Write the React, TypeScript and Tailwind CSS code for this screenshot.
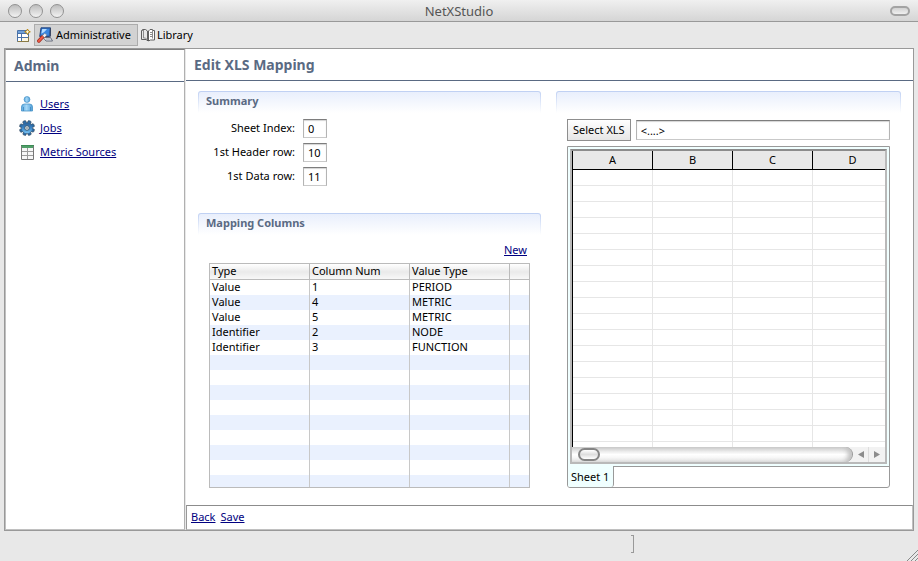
import type { ReactNode } from 'react';

type Mapping = { type: string; column: string; valueType: string };

const mappings: Mapping[] = [
  { type: 'Value', column: '1', valueType: 'PERIOD' },
  { type: 'Value', column: '4', valueType: 'METRIC' },
  { type: 'Value', column: '5', valueType: 'METRIC' },
  { type: 'Identifier', column: '2', valueType: 'NODE' },
  { type: 'Identifier', column: '3', valueType: 'FUNCTION' },
];

const emptyMappingRows = Array.from({ length: 8 }, (_, i) => i);
const sheetColumns = ['A', 'B', 'C', 'D'];
const sheetRows = Array.from({ length: 17 }, (_, i) => i);

const summaryFields = [
  { id: 'sheet-index', label: 'Sheet Index:', value: '0' },
  { id: 'header-row', label: '1st Header row:', value: '10' },
  { id: 'data-row', label: '1st Data row:', value: '11' },
];

function PerspectiveIcon() {
  return (
    <svg width="14" height="14" viewBox="0 0 14 14" aria-hidden="true">
      <path d="M.5 2.500h11v11H.5z" fill="#fff" stroke="#4a72a8" />
      <path d="M1 3h8v2H1z" fill="#6f9fd8" />
      <path d="M1 5.500h10M4.500 6v7M1 9.500h3M5 9.500h6" stroke="#4a72a8" fill="none" />
      <path d="M5 10h6v3H5z" fill="#fdf8e4" />
      <path d="M.5 13.500h11v-5" stroke="#8b7b45" fill="none" />
      <path d="M10.500 1l.9 1.900 1.900.9-1.900.9-.9 1.900-.9-1.900-1.900-.9 1.900-.9z" fill="#fffbe0" stroke="#b8860f" />
    </svg>
  );
}

function AdminIcon() {
  return (
    <svg width="16" height="16" viewBox="0 0 16 16" aria-hidden="true">
      <path d="M4 .8h9.500l-.8 8.700H2.700z" fill="#2f6fc4" stroke="#1f3f7a" strokeWidth=".9" />
      <path d="M5 2h7.200l-.5 6.300H4z" fill="#3a86e0" />
      <path d="M5.200 2h4.800Q8 5 4.300 6.800z" fill="#b4dcff" />
      <path d="M13.500 1v8.500" stroke="#33415e" strokeWidth=".9" />
      <path d="M6 10.500h7.500l2 3.500H9z" fill="#e3e6ee" stroke="#5a6070" strokeWidth=".9" />
      <path d="M9 12h4.500" stroke="#8a90a0" strokeWidth=".8" />
      <path d="M1.800 14L6 9.500" stroke="#a32719" strokeWidth="3.400" strokeLinecap="round" />
      <path d="M1.800 14L6 9.500" stroke="#ee5a45" strokeWidth="2" strokeLinecap="round" />
      <path d="M5.500 8.700l2.300-2.400 2 1.800-2.300 2.400z" fill="#f4f4f8" stroke="#777" strokeWidth=".6" />
    </svg>
  );
}

function LibraryIcon() {
  return (
    <svg width="14" height="14" viewBox="0 0 14 14" aria-hidden="true">
      <path d="M.5 2.500h1V1.500h3l2 1.500v9.500l-1.500-1h-4.500z" fill="#e8e8e8" stroke="#606060" />
      <path d="M2.500 2v8h2l2 2" fill="none" stroke="#8c8c8c" />
      <path d="M7.500 3l1.500-1.500h2.500v1h2v9.500h-4l-2 1z" fill="#fff" stroke="#606060" />
      <path d="M9 4.500h2M9 6.500h2M9 8.500h2M11.500 3v7.500" stroke="#8c8c8c" />
      <path d="M6 12.500h2" stroke="#555" />
    </svg>
  );
}

function UserIcon() {
  return (
    <svg width="14" height="16" viewBox="0 0 14 16" aria-hidden="true">
      <defs>
        <linearGradient id="user-fill" x1="0" x2="1" y1="0" y2="0">
          <stop offset="0" stopColor="#5aa9df" />
          <stop offset=".45" stopColor="#a5d8f8" />
          <stop offset="1" stopColor="#4f9fd8" />
        </linearGradient>
      </defs>
      <path d="M1.500 15v-4q0-3 3-3h5q3 0 3 3v4z" fill="url(#user-fill)" stroke="#4a94c8" strokeWidth=".8" />
      <path d="M3.500 15v-4M10.500 15v-4" stroke="#3d88bf" strokeWidth=".8" />
      <circle cx="7" cy="3.500" r="2.900" fill="url(#user-fill)" stroke="#4a94c8" strokeWidth=".8" />
    </svg>
  );
}

function JobsIcon() {
  return (
    <svg width="16" height="16" viewBox="0 0 16 16" aria-hidden="true">
      <defs>
        <linearGradient id="gear-fill" x1="0" x2="0" y1="0" y2="1">
          <stop offset="0" stopColor="#2b5f97" />
          <stop offset=".5" stopColor="#3a86c8" />
          <stop offset="1" stopColor="#7cc4f2" />
        </linearGradient>
      </defs>
      <g fill="#2f6ea8" stroke="#2c4257" strokeWidth=".6">
        <rect x="6.400" y=".4" width="3.200" height="15.200" rx=".8" transform="rotate(22 8 8)" />
        <rect x="6.400" y=".4" width="3.200" height="15.200" rx=".8" transform="rotate(67 8 8)" />
        <rect x="6.400" y=".4" width="3.200" height="15.200" rx=".8" transform="rotate(112 8 8)" />
        <rect x="6.400" y=".4" width="3.200" height="15.200" rx=".8" transform="rotate(157 8 8)" />
      </g>
      <circle cx="8" cy="8" r="5.300" fill="url(#gear-fill)" />
      <circle cx="8" cy="8" r="2.300" fill="#dfe6ea" stroke="#34536d" strokeWidth=".9" />
      <circle cx="8" cy="8" r=".8" fill="#5d6d78" />
    </svg>
  );
}

function SheetIcon() {
  return (
    <svg width="13" height="15" viewBox="0 0 13 15" aria-hidden="true">
      <path d="M.5.500h12v14H.5z" fill="#f6f6f6" stroke="#777" />
      <path d="M1 1h11v2H1z" fill="#4fa068" />
      <path d="M0 .5h13" stroke="#3d8a55" />
      <path d="M1 6.500h11M1 10.500h11M6.500 3v11" stroke="#9a9a9a" fill="none" />
    </svg>
  );
}

const navItems = [
  { label: 'Users', icon: <UserIcon /> },
  { label: 'Jobs', icon: <JobsIcon /> },
  { label: 'Metric Sources', icon: <SheetIcon /> },
];

function TextLink({ children }: { children: ReactNode }) {
  return (
    <a href="#" className="text-[#000080] underline underline-offset-1">
      {children}
    </a>
  );
}

function SectionHeader({ title }: { title?: string }) {
  return (
    <div className="h-[22px] rounded-t-[3px] bg-linear-to-b from-[#bfd0f3] to-white px-px pt-px">
      <h2 className="h-full rounded-t-[2px] bg-linear-to-b from-[#e9effc] to-white px-[7px] text-[11px] leading-[18px] font-bold text-[#5a6a83]">
        {title}
      </h2>
    </div>
  );
}

const inputClass =
  'border border-t-[#7d7d7d] border-x-[#b4b4b4] border-b-[#c9c9c9] bg-white px-1 text-[11px] leading-4 shadow-[inset_0_1px_1px_#d4d4d4] outline-none';

function TitleBar() {
  return (
    <header className="flex h-[22px] items-center border-b border-[#999] bg-linear-to-b from-[#f0f0f0] to-[#d5d5d5] px-2">
      <div className="flex flex-1 gap-[7px]">
        {['Close', 'Minimize', 'Zoom'].map((name) => (
          <button
            key={name}
            type="button"
            aria-label={name}
            className="size-[14px] rounded-full border border-[#929292] bg-linear-to-b from-[#bdbdbd] to-[#f3f3f3]"
          />
        ))}
      </div>
      <h1 className="text-[13px] leading-5 text-[#555]">NetXStudio</h1>
      <div className="flex flex-1 justify-end">
        <button
          type="button"
          aria-label="Toggle toolbar"
          className="h-[10px] w-5 rounded-full border-2 border-[#a3a3a3] bg-linear-to-b from-[#d2d2d2] to-[#f0f0f0]"
        />
      </div>
    </header>
  );
}

function Toolbar() {
  return (
    <nav className="flex h-[26px] items-center pl-[17px]" aria-label="Perspectives">
      <button type="button" aria-label="Open perspective" className="mr-[3px]">
        <PerspectiveIcon />
      </button>
      <button
        type="button"
        className="flex h-[22px] items-center gap-[3px] border border-[#acacac] bg-[#d2d2d2] pr-[6px] pl-[2px]"
      >
        <AdminIcon />
        Administrative
      </button>
      <button type="button" className="ml-[3px] flex h-[22px] items-center gap-[2px]">
        <LibraryIcon />
        Library
      </button>
    </nav>
  );
}

function Sidebar() {
  return (
    <aside className="w-[180px] shrink-0 border border-t-[#808080] border-r-[#b0b0b0] border-b-[#c0c0c0] border-l-[#c0c0c0] bg-white">
      <h2 className="h-8 border-b border-[#5a6a83] px-2 text-[14px] leading-[31px] font-bold text-[#5a6a83]">Admin</h2>
      <ul className="pt-[10px] pl-[13px]">
        {navItems.map((item) => (
          <li key={item.label} className="flex h-6 items-center gap-[5px]">
            <span className="flex w-4 justify-center">{item.icon}</span>
            <TextLink>{item.label}</TextLink>
          </li>
        ))}
      </ul>
    </aside>
  );
}

function MappingTable() {
  const cell = 'border-r border-[#c8c8c8] px-[2px] pb-[2px] leading-[13px]';
  return (
    <table className="w-full table-fixed border-separate border-spacing-0 border border-[#bbb] text-left">
      <colgroup>
        <col className="w-[100px]" />
        <col className="w-[100px]" />
        <col className="w-[100px]" />
        <col />
      </colgroup>
      <thead>
        <tr className="h-4 bg-linear-to-b from-white via-[#eaeaea] to-[#fafafa]">
          {['Type', 'Column Num', 'Value Type', ''].map((name) => (
            <th
              key={name}
              className="border-r border-b border-[#bbb] px-[2px] pb-[2px] leading-[13px] font-normal last:border-r-0"
            >
              {name}
            </th>
          ))}
        </tr>
      </thead>
      <tbody>
        {mappings.map((row) => (
          <tr key={row.column} className="h-[15px] even:bg-[#eaf1fe]">
            <td className={cell}>{row.type}</td>
            <td className={cell}>{row.column}</td>
            <td className={cell}>{row.valueType}</td>
            <td />
          </tr>
        ))}
        {emptyMappingRows.map((i) => (
          <tr key={i} className="h-[15px] even:bg-[#eaf1fe]">
            <td className={cell} />
            <td className={cell} />
            <td className={cell} />
            <td />
          </tr>
        ))}
        <tr className="h-3 bg-[#eaf1fe]">
          <td className={cell} />
          <td className={cell} />
          <td className={cell} />
          <td />
        </tr>
      </tbody>
    </table>
  );
}

function ScrollBar() {
  return (
    <div className="flex h-[15px] bg-[#f2f2f2]">
      <div className="flex flex-1 items-center rounded-r-full border-r border-[#999] bg-linear-to-b from-[#cfcfcf] via-white to-[#ececec] pl-[6px] shadow-[inset_-4px_0_4px_#c4c4c4]">
        <div className="h-[13px] w-[22px] rounded-full border-2 border-[#858585] bg-linear-to-b from-white via-[#dedede] to-white" />
      </div>
      <button type="button" aria-label="Scroll left" className="flex w-4 items-center justify-center border-r border-[#ddd]">
        <svg width="6" height="7" viewBox="0 0 6 7" aria-hidden="true">
          <path d="M6 0v7L0 3.500z" fill="#8c8c8c" />
        </svg>
      </button>
      <button type="button" aria-label="Scroll right" className="flex w-4 items-center justify-center">
        <svg width="6" height="7" viewBox="0 0 6 7" aria-hidden="true">
          <path d="M0 0v7l6-3.500z" fill="#8c8c8c" />
        </svg>
      </button>
    </div>
  );
}

function SheetPreview() {
  return (
    <div className="mt-[5px] overflow-hidden rounded-b-[3px] border border-[#999] bg-white">
      <div className="bg-[#f0ffff] p-[2px]">
        <div className="overflow-hidden border-2 border-[#b9b9b9] border-t-[#8c8c8c] bg-white">
          <table className="w-[calc(100%+8px)] table-fixed border-separate border-spacing-0 border-l border-black">
            <colgroup>
              <col className="w-20" />
              <col className="w-20" />
              <col className="w-20" />
              <col />
            </colgroup>
            <thead>
              <tr className="h-[19px] bg-[#e8e8e8]">
                {sheetColumns.map((name) => (
                  <th key={name} className="border-r border-b border-black leading-[18px] font-normal">
                    {name}
                  </th>
                ))}
              </tr>
            </thead>
            <tbody>
              {sheetRows.map((row) => (
                <tr key={row} className="h-4">
                  {sheetColumns.map((name) => (
                    <td key={name} className="border-r border-b border-[#e6e6e6]" />
                  ))}
                </tr>
              ))}
              <tr className="h-[5px]">
                {sheetColumns.map((name) => (
                  <td key={name} className="border-r border-[#e6e6e6]" />
                ))}
              </tr>
            </tbody>
          </table>
          <ScrollBar />
        </div>
      </div>
      <div className="flex h-[21px]">
        <button type="button" className="rounded-br-[3px] border-r border-[#999] bg-[#f0ffff] pr-1 pl-[3px]">
          Sheet 1
        </button>
        <div className="flex-1 border-t border-[#999]" />
      </div>
    </div>
  );
}

function Editor() {
  return (
    <main className="ml-px flex min-w-0 flex-1 flex-col bg-white">
      <h1 className="h-8 border-b border-[#5a6a83] px-2 text-[14px] leading-[31px] font-bold text-[#5a6a83]">
        Edit XLS Mapping
      </h1>
      <div className="grid flex-1 grid-cols-[343fr_345fr] gap-[15px] px-3 pt-[10px] pb-[17px]">
        <div>
          <section>
            <SectionHeader title="Summary" />
            <form className="flex flex-col gap-[5px] pt-[6px]">
              {summaryFields.map((field) => (
                <div key={field.id} className="flex gap-2">
                  <label htmlFor={field.id} className="w-[97px] text-right leading-[17px]">
                    {field.label}
                  </label>
                  <input id={field.id} defaultValue={field.value} className={`${inputClass} h-[19px] w-6`} />
                </div>
              ))}
            </form>
          </section>
          <section className="mt-[27px]">
            <SectionHeader title="Mapping Columns" />
            <div className="px-[11px]">
              <div className="flex h-7 items-center justify-end pt-[2px] pr-[3px]">
                <TextLink>New</TextLink>
              </div>
              <MappingTable />
            </div>
          </section>
        </div>
        <section>
          <SectionHeader />
          <div className="px-[11px] pt-[6px]">
            <div className="flex items-center gap-[5px]">
              <button
                type="button"
                className="h-[22px] border border-[#8e8e8e] bg-linear-to-b from-white to-[#e6e6e6] px-[5px]"
              >
                Select XLS
              </button>
              <input aria-label="XLS file" defaultValue="<....>" className={`${inputClass} h-5 min-w-0 flex-1`} />
            </div>
            <SheetPreview />
          </div>
        </section>
      </div>
      <footer className="flex h-[25px] items-center gap-[5px] border border-t-[#8c8c8c] border-r-[#c0c0c0] border-b-[#c0c0c0] border-l-[#999] px-1 pb-[2px]">
        <TextLink>Back</TextLink>
        <TextLink>Save</TextLink>
      </footer>
    </main>
  );
}

export default function App() {
  return (
    <div className="flex min-h-screen flex-col bg-[#e8e8e8] font-['Lucida_Grande','Noto_Sans',sans-serif] text-[11px] leading-4 text-black">
      <TitleBar />
      <Toolbar />
      <div className="mr-1 ml-1 flex flex-1 border border-[#999]">
        <Sidebar />
        <Editor />
      </div>
      <div className="flex h-[30px] items-end">
        <div className="flex h-full flex-1 items-start justify-end pt-1">
          <div className="h-[18px] w-[3px] border border-l-0 border-[#999]" />
        </div>
        <div className="flex w-[284px] justify-end">
          <svg width="11" height="11" viewBox="0 0 11 11" aria-hidden="true">
            <path d="M0 11L11 0M4 11l7-7M8 11l3-3" stroke="#888" fill="none" />
          </svg>
        </div>
      </div>
    </div>
  );
}
